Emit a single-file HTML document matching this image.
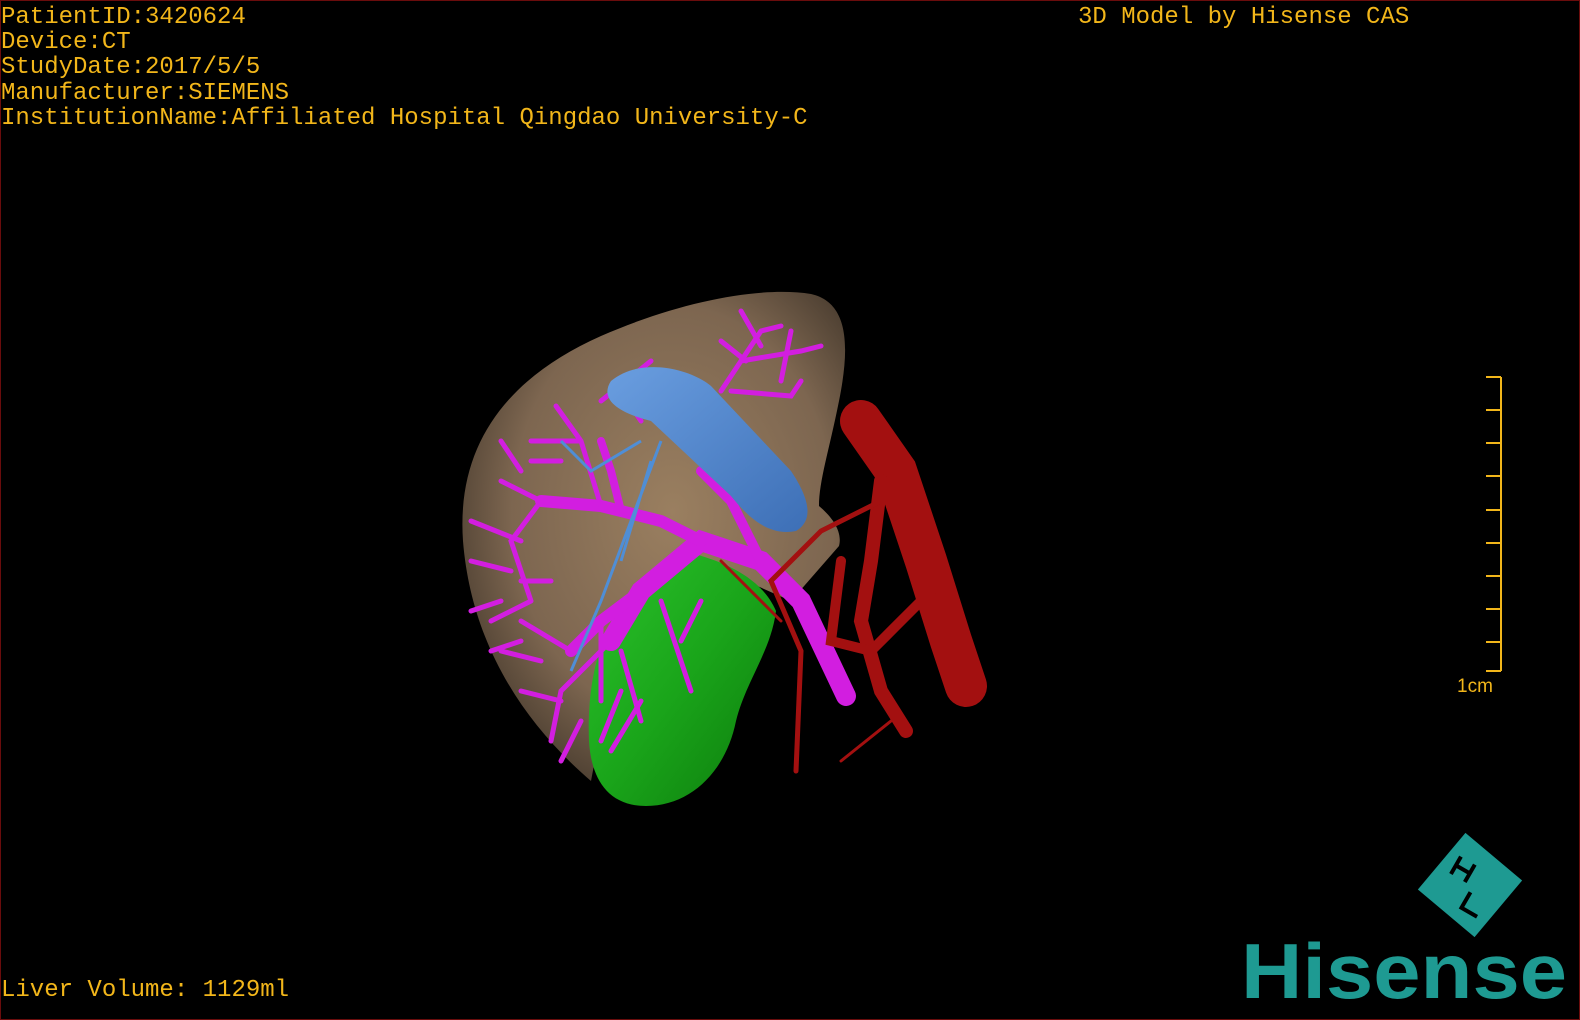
<!DOCTYPE html>
<html><head><meta charset="utf-8"><style>
html,body{margin:0;padding:0;background:#000}
#f{position:relative;width:1578px;height:1018px;border:1px solid #6a0c0c;background:#000;overflow:hidden}
.t{position:absolute;font-family:"Liberation Mono",monospace;font-size:24px;color:#f2b61a;line-height:25.2px;white-space:pre}
</style></head><body><div id="f">
<div class="t" style="left:0;top:4px">PatientID:3420624
Device:CT
StudyDate:2017/5/5
Manufacturer:SIEMENS
InstitutionName:Affiliated Hospital Qingdao University-C</div>
<div class="t" style="left:1077px;top:4px">3D Model by Hisense CAS</div>
<div class="t" style="left:0;top:977px">Liver Volume: 1129ml</div>

<svg width="1578" height="1018" style="position:absolute;left:0;top:0">
<defs>
<radialGradient id="lv" cx="0.55" cy="0.45" r="0.6"><stop offset="0" stop-color="#9a7f60"/><stop offset="0.7" stop-color="#7d6650"/><stop offset="1" stop-color="#4e4032"/></radialGradient>
<linearGradient id="gr" x1="0" y1="0" x2="1" y2="1"><stop offset="0" stop-color="#2cc22c"/><stop offset="0.5" stop-color="#1aa51a"/><stop offset="1" stop-color="#0c7a0c"/></linearGradient>
<linearGradient id="bl" x1="0" y1="0" x2="1" y2="1"><stop offset="0" stop-color="#6a9ee0"/><stop offset="1" stop-color="#3d6fb6"/></linearGradient>
</defs>
<path d="M600,335 C680,300 760,285 810,293 C850,302 848,350 838,400 C828,450 818,480 818,505 C830,515 842,530 838,545 L790,600 L700,560 L620,620 L590,780 C520,720 470,640 462,540 C455,440 510,375 600,335 Z" fill="url(#lv)"/>
<path d="M690,552 C720,560 760,575 775,610 C770,650 745,680 735,720 C725,770 690,805 645,805 C605,805 590,775 588,740 C586,690 595,640 620,610 C640,580 665,556 690,552 Z" fill="url(#gr)"/>
<g stroke="#d21ee0" fill="none" stroke-linecap="round">
<path d="M845,695 L800,600 L760,560 L700,540 L640,590 L610,640" stroke-width="20"/>
<path d="M700,540 L660,520 L600,505 L540,500" stroke-width="12"/>
<path d="M640,590 L600,620 L570,650" stroke-width="12"/>
<path d="M760,560 L730,500 L700,470" stroke-width="10"/>
<path d="M620,510 L610,470 L600,440" stroke-width="8"/>
<g stroke-width="5">
<path d="M540,500 L500,480 M540,500 L510,540 L530,600 M600,505 L580,440 L555,405 M580,440 L530,440 M610,640 L560,690 M570,650 L520,620 M560,690 L550,740 M600,620 L600,700 M620,650 L640,720 M660,600 L690,690 M520,540 L470,520 M530,600 L490,620 M510,570 L470,560"/>
<path d="M720,390 L760,330 M760,330 L780,325 M740,360 L800,350 L820,345 M730,390 L790,395 L800,380 M745,360 L720,340 M600,400 L650,360 M640,420 L620,390 M780,380 L790,330 M760,345 L740,310"/>
<path d="M560,700 L520,690 M540,660 L500,650 M580,720 L560,760 M620,690 L600,740 M520,470 L500,440 M550,580 L520,580 M500,600 L470,610 M520,640 L490,650 M560,460 L530,460 M640,700 L610,750 M680,640 L700,600"/>
</g>
</g>
<path d="M610,380 C640,355 690,368 710,385 L790,470 C810,500 812,520 795,530 C770,535 750,520 730,495 L650,420 C610,410 600,395 610,380 Z" fill="url(#bl)"/>
<g stroke="#4f8ed6" stroke-width="3" fill="none"><path d="M660,440 L630,520 L600,600 L570,670 M640,440 L590,470 L560,440 M650,460 L620,560"/></g>
<g stroke="#a31010" fill="none" stroke-linecap="round">
<path d="M860,420 L895,470 L925,560 L950,640 L965,685" stroke-width="42"/>
<path d="M880,480 L870,560 L860,620 L880,690 L905,730" stroke-width="14"/>
<path d="M880,500 L820,530 L770,580 L800,650 L795,770" stroke-width="5"/>
<path d="M840,560 L830,640 L870,650 L920,600 L930,590" stroke-width="10"/>
<path d="M890,720 L840,760 M720,560 L780,620" stroke-width="3"/>
</g>
<g stroke="#f2b61a" stroke-width="2" fill="none">
<path d="M1500,376 V670"/>
<path d="M1485,376H1500M1485,409H1500M1485,442H1500M1485,475H1500M1485,509H1500M1485,542H1500M1485,575H1500M1485,608H1500M1485,641H1500M1485,670H1500"/>
</g>
<text x="1456" y="691" font-family="Liberation Sans,sans-serif" font-size="19" fill="#f2b61a">1cm</text>
<g transform="translate(1469,884) rotate(40)">
<rect x="-37" y="-37" width="74" height="74" fill="#1e9a92"/>
<g transform="rotate(-10)"><path d="M-22,-20 V0 M-22,-10 H-6 M-6,-20 V0 M4,6 V24 H22" stroke="#000" stroke-width="4" fill="none"/></g>
</g>
<text x="1240" y="997" font-family="Liberation Sans,sans-serif" font-weight="bold" font-size="78" fill="#1e9a92" textLength="326" lengthAdjust="spacingAndGlyphs">Hisense</text>
</svg>
</div></body></html>
